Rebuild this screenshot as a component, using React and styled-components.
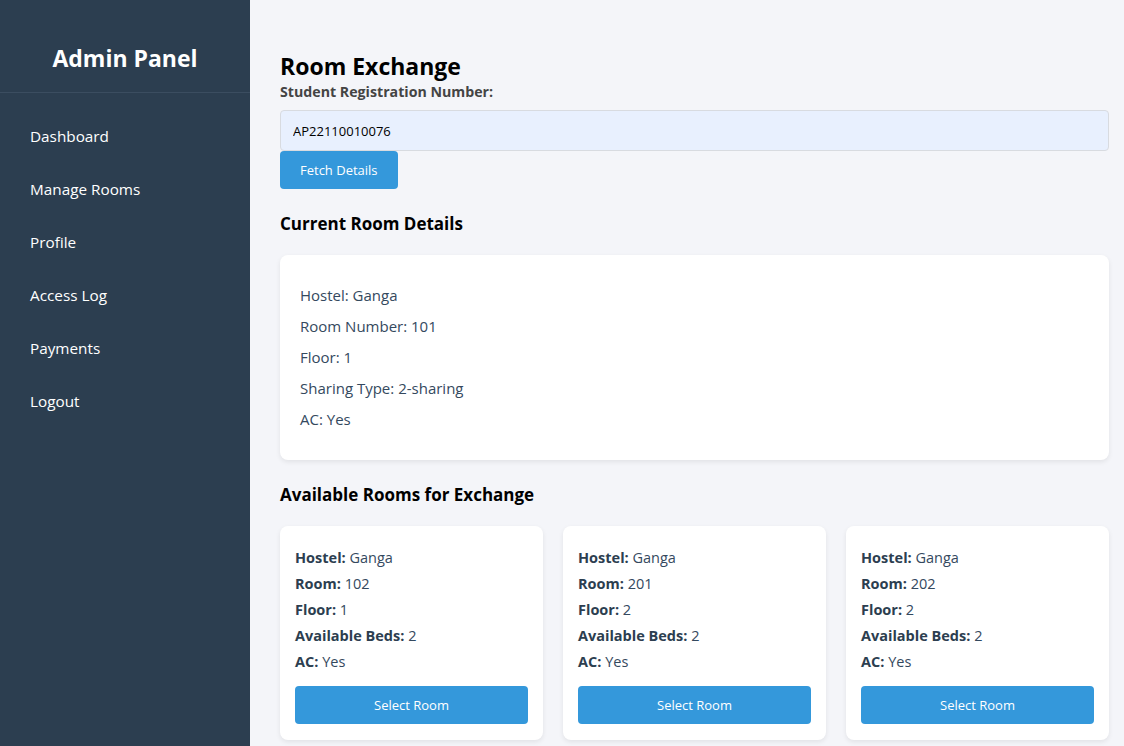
import React from 'react';
import styled, { createGlobalStyle } from 'styled-components';

const GlobalStyle = createGlobalStyle`
  html, body {
    margin: 0;
    padding: 0;
    font-family: 'Open Sans', 'Noto Sans', sans-serif;
  }
  * {
    box-sizing: border-box;
  }
`;

const Layout = styled.div`
  display: flex;
  min-height: 100vh;
`;

const Sidebar = styled.aside`
  width: 250px;
  flex-shrink: 0;
  background: #2c3e50;
  color: #fff;
`;

const Brand = styled.div`
  height: 93px;
  display: flex;
  align-items: center;
  justify-content: center;
  border-bottom: 1px solid #3b4d60;
  font-size: 23px;
  font-weight: 700;
  padding-top: 24px;
`;

const Nav = styled.ul`
  list-style: none;
  margin: 0;
  padding: 17px 0 0;
`;

const NavItem = styled.li`
  padding: 16px 30px;
  font-size: 15.3px;
  line-height: 21px;
  cursor: pointer;
`;

const Main = styled.main`
  flex: 1;
  background: #f4f5f9;
  padding: 52px 15px 20px 30px;
`;

const Title = styled.h2`
  margin: 0;
  font-size: 23px;
  line-height: 29px;
  font-weight: 700;
  color: #000;
`;

const Label = styled.label`
  display: block;
  margin-top: 2px;
  font-size: 14.2px;
  line-height: 18px;
  font-weight: 700;
  color: #444;
`;

const Input = styled.input`
  display: block;
  width: 100%;
  height: 41px;
  margin-top: 9px;
  padding: 0 12px;
  border: 1px solid #d8dbe0;
  border-radius: 4px;
  background: #e8f0fe;
  font-family: inherit;
  font-size: 13px;
  color: #000;
  outline: none;
`;

const Button = styled.button`
  display: block;
  height: 38px;
  padding: 0 20px;
  border: none;
  border-radius: 4px;
  background: #3498db;
  color: #fff;
  font-family: inherit;
  font-size: 13px;
  cursor: pointer;
  width: ${(p) => (p.$full ? '100%' : 'auto')};
`;

const SectionTitle = styled.h3`
  margin: 24px 0 20px;
  font-size: 17px;
  line-height: 22px;
  font-weight: 700;
  color: #000;
`;

const Card = styled.div`
  background: #fff;
  border-radius: 8px;
  box-shadow: 0 2px 5px rgba(0, 0, 0, 0.08);
  display: flex;
  flex-direction: column;
`;

const DetailsCard = styled(Card)`
  padding: 30px 20px;
  gap: 10px;
`;

const Line = styled.p`
  margin: 0;
  color: #34495e;
  font-size: ${(p) => (p.$small ? '14.5px' : '15px')};
  line-height: ${(p) => (p.$small ? '22px' : '21px')};

  b {
    color: #2c3e50;
  }
`;

const RoomGrid = styled.div`
  display: grid;
  grid-template-columns: repeat(3, 1fr);
  gap: 20px;
`;

const RoomCard = styled(Card)`
  padding: 21px 15px 16px;
  gap: 4px;

  ${Button} {
    margin-top: 9px;
  }
`;

const rooms = [
  { hostel: 'Ganga', room: 102, floor: 1, beds: 2, ac: 'Yes' },
  { hostel: 'Ganga', room: 201, floor: 2, beds: 2, ac: 'Yes' },
  { hostel: 'Ganga', room: 202, floor: 2, beds: 2, ac: 'Yes' },
];

const navLinks = ['Dashboard', 'Manage Rooms', 'Profile', 'Access Log', 'Payments', 'Logout'];

export default function App() {
  return (
    <>
      <GlobalStyle />
      <Layout>
        <Sidebar>
          <Brand>Admin Panel</Brand>
          <Nav>
            {navLinks.map((l) => (
              <NavItem key={l}>{l}</NavItem>
            ))}
          </Nav>
        </Sidebar>
        <Main>
          <Title>Room Exchange</Title>
          <Label htmlFor="reg">Student Registration Number:</Label>
          <Input id="reg" defaultValue="AP22110010076" />
          <Button>Fetch Details</Button>

          <SectionTitle>Current Room Details</SectionTitle>
          <DetailsCard>
            <Line>Hostel: Ganga</Line>
            <Line>Room Number: 101</Line>
            <Line>Floor: 1</Line>
            <Line>Sharing Type: 2-sharing</Line>
            <Line>AC: Yes</Line>
          </DetailsCard>

          <SectionTitle>Available Rooms for Exchange</SectionTitle>
          <RoomGrid>
            {rooms.map((r) => (
              <RoomCard key={r.room}>
                <Line $small><b>Hostel:</b> {r.hostel}</Line>
                <Line $small><b>Room:</b> {r.room}</Line>
                <Line $small><b>Floor:</b> {r.floor}</Line>
                <Line $small><b>Available Beds:</b> {r.beds}</Line>
                <Line $small><b>AC:</b> {r.ac}</Line>
                <Button $full>Select Room</Button>
              </RoomCard>
            ))}
          </RoomGrid>
        </Main>
      </Layout>
    </>
  );
}
